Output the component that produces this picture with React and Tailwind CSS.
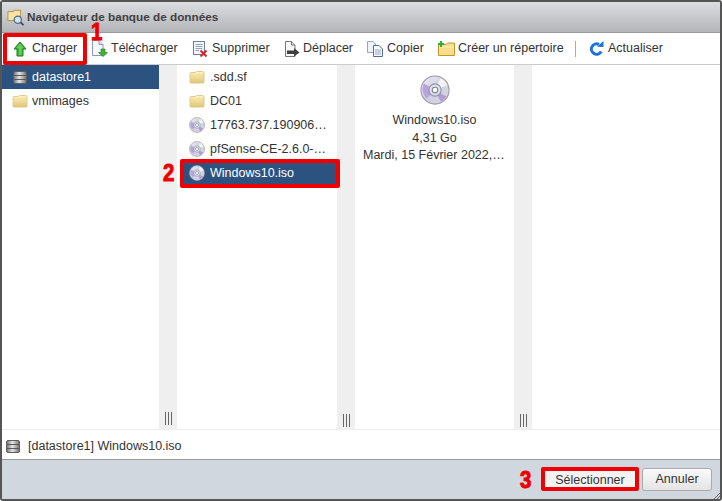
import React from "react";

const Folder = () => (
  <svg width="16" height="14" viewBox="0 0 16 14" className="shrink-0">
    <defs>
      <linearGradient id="fg" x1="0" y1="0" x2="0" y2="1">
        <stop offset="0" stopColor="#fdf3c4" />
        <stop offset="1" stopColor="#e2c673" />
      </linearGradient>
    </defs>
    <path d="M1 3.5Q1 2.5 2 2.5H6L7.5 1.5H13.5Q15 1.5 15 3V12Q15 13 14 13H2Q1 13 1 12Z" fill="url(#fg)" stroke="#d9c07c" strokeWidth="0.8" />
    <path d="M1 5H15" stroke="#f0dc9c" strokeWidth="1" />
  </svg>
);

const Disc = ({ size = 16 }) => (
  <svg width={size} height={size} viewBox="0 0 32 32" className="shrink-0">
    <defs>
      <linearGradient id="dg" x1="0" y1="0" x2="1" y2="1">
        <stop offset="0" stopColor="#efeff3" />
        <stop offset="0.5" stopColor="#cfcfe2" />
        <stop offset="1" stopColor="#d8d8de" />
      </linearGradient>
    </defs>
    <circle cx="16" cy="16" r="15" fill="url(#dg)" stroke="#9a9aa2" strokeWidth="1.2" />
    <path d="M16 16L4 9A14 14 0 0 0 7 25Z" fill="#b9a3dc" />
    <path d="M16 16L28 23A14 14 0 0 1 22 28.5Z" fill="#b49ad8" />
    <path d="M16 16L22 3.5A14 14 0 0 1 29 11Z" fill="#f3f3f6" />
    <circle cx="16" cy="16" r="6.5" fill="#dfe2ea" stroke="#8d93a5" strokeWidth="1.2" />
    <circle cx="16" cy="16" r="3" fill="#fff" stroke="#7d8396" strokeWidth="1.2" />
  </svg>
);

const Datastore = () => (
  <svg width="14" height="13" viewBox="0 0 14 13" className="shrink-0">
    <defs>
      <linearGradient id="ds" x1="0" y1="0" x2="1" y2="0">
        <stop offset="0" stopColor="#6f6f6f" />
        <stop offset="0.45" stopColor="#e6e6e6" />
        <stop offset="1" stopColor="#707070" />
      </linearGradient>
    </defs>
    <rect x="0.5" y="0.5" width="13" height="12" rx="1.5" fill="url(#ds)" stroke="#5e5e5e" />
    <path d="M1 4.5H13M1 8.5H13" stroke="#5a5a5a" strokeWidth="1" />
  </svg>
);

const Upload = () => (
  <svg width="14" height="16" viewBox="0 0 14 16" className="shrink-0">
    <path d="M7 1L13 8H10V15H4V8H1Z" fill="#3fb53a" stroke="#1f7d22" strokeWidth="1" strokeLinejoin="round" />
    <path d="M7 2.5L10.5 7H8.5V14H6V7H3.5Z" fill="#62d158" />
  </svg>
);

const Download = () => (
  <svg width="17" height="17" viewBox="0 0 17 17" className="shrink-0">
    <path d="M1.5 0.5H8L12 4.5V15.5H1.5Z" fill="#f6f8fb" stroke="#8b9bb3" />
    <path d="M8 0.5V4.5H12" fill="#dfe5ee" stroke="#8b9bb3" />
    <path d="M10 9H14V12.5H16.5L12 16.5L7.5 12.5H10Z" fill="#42b13b" stroke="#2a8a2a" strokeWidth="0.7" />
  </svg>
);

const Delete = () => (
  <svg width="15" height="16" viewBox="0 0 15 16" className="shrink-0">
    <rect x="0.5" y="0.5" width="11" height="13" fill="#f3f6fb" stroke="#6d7f9c" />
    <path d="M2.5 3.5H9.5M2.5 5.5H9.5M2.5 7.5H9.5M2.5 9.5H6" stroke="#8fa3c2" />
    <path d="M7.5 9.5L13.5 15.5M13.5 9.5L7.5 15.5" stroke="#d5262a" strokeWidth="2" />
  </svg>
);

const Move = () => (
  <svg width="16" height="16" viewBox="0 0 16 16" className="shrink-0">
    <path d="M1.5 0.5H7.5L11 4V15.5H1.5Z" fill="#f7f7f7" stroke="#777" />
    <path d="M7.5 0.5V4H11" fill="#ddd" stroke="#777" />
    <path d="M3 9.5H10V7L15.5 11.5L10 15.5V13H3Z" fill="#3f3f3f" />
  </svg>
);

const Copy = () => (
  <svg width="17" height="16" viewBox="0 0 17 16" className="shrink-0">
    <path d="M0.5 0.5H6L8.5 3V11.5H0.5Z" fill="#eef3fa" stroke="#8ea7c9" />
    <path d="M6.5 4.5H12L15.5 8V15.5H6.5Z" fill="#f6f9fd" stroke="#4f6e9b" />
    <path d="M8 9H14M8 11H14M8 13H14" stroke="#8ea7c9" />
  </svg>
);

const NewFolder = () => (
  <svg width="17" height="15" viewBox="0 0 17 15" className="shrink-0">
    <path d="M0.5 3.5H8L9.5 2H16.5V14.5H0.5Z" fill="#f7dd8c" stroke="#c6942e" />
    <path d="M1 6H16" stroke="#fcefc0" />
    <path d="M3 0V6M0 3H6" stroke="#2fae36" strokeWidth="2.2" />
  </svg>
);

const Refresh = () => (
  <svg width="15" height="15" viewBox="0 0 15 15" className="shrink-0">
    <path d="M12.2 10.5A5.2 5.2 0 1 1 10 3.4" fill="none" stroke="#1a73d6" strokeWidth="3" />
    <path d="M8 5.8L14.5 6V0Z" fill="#1a73d6" />
  </svg>
);

const Tool = ({ icon, label, className = "" }) => (
  <div className={`flex items-center ${className}`}>
    {icon}
    <span>{label}</span>
  </div>
);

const Row = ({ icon, label, selected, className }) => (
  <div className={`flex h-6 items-center pr-[4px] ${className} ${selected ? "bg-[#2c5380] text-white" : ""}`}>
    <span className="flex w-[16px] shrink-0 justify-center">{icon}</span>
    <span className="truncate">{label}</span>
  </div>
);

const Grip = ({ mb = "mb-[4px]" }) => (
  <div className="flex w-[18px] shrink-0 flex-col items-center justify-end bg-[#efefef]">
    <div className={`flex h-[13px] gap-[2px] ${mb}`}>
      <div className="w-px bg-[#666]" />
      <div className="w-px bg-[#666]" />
      <div className="w-px bg-[#666]" />
    </div>
  </div>
);

const Badge = ({ children, className = "" }) => (
  <span className={`absolute scale-x-[0.85] font-['Liberation_Sans',sans-serif] text-[24px] leading-none font-bold text-[#ee0000] [-webkit-text-stroke:1px_#ee0000] ${className}`}>
    {children}
  </span>
);

const col1 = "gap-[4px] pl-[10px]";
const col2 = "gap-[5px] pl-[9px]";

export default function App() {
  return (
    <div className="relative flex h-[501px] w-[722px] flex-col overflow-hidden rounded-[3px] border-2 border-[#555] bg-white font-['Liberation_Sans',sans-serif] text-[12.5px] text-[#333]">
      <div className="flex h-[31px] shrink-0 items-center gap-[2px] border-b border-[#999] bg-gradient-to-b from-[#dcdde0] to-[#b4b5b8] pl-[5px]">
        <svg width="18" height="18" viewBox="0 0 20 20" className="shrink-0">
          <path d="M1 4H7L8 2.5H15V14H1Z" fill="#f7e3a6" stroke="#b48c3a" />
          <circle cx="12" cy="13" r="4" fill="#cfe3f2" stroke="#4a6a88" strokeWidth="1.4" />
          <path d="M15 16L18.5 19" stroke="#3a4c63" strokeWidth="2" />
        </svg>
        <span className="text-[11.75px] font-bold text-[#3f3f42]">Navigateur de banque de données</span>
      </div>

      <div className="flex h-8 shrink-0 items-center border-b border-[#ccc] pl-[11px]">
        <Tool icon={<Upload />} label="Charger" className="w-[78px] gap-[5px]" />
        <Tool icon={<Download />} label="Télécharger" className="w-[102px] gap-[3px]" />
        <Tool icon={<Delete />} label="Supprimer" className="w-[91px] gap-[4px]" />
        <Tool icon={<Move />} label="Déplacer" className="w-[83px] gap-[3px]" />
        <Tool icon={<Copy />} label="Copier" className="w-[71px] gap-[3px]" />
        <Tool icon={<NewFolder />} label="Créer un répertoire" className="w-[137px] gap-[3px]" />
        <div className="mr-[13px] h-4 w-px bg-[#aaa]" />
        <Tool icon={<Refresh />} label="Actualiser" className="gap-[4px]" />
      </div>

      <div className="flex min-h-0 flex-1 border-b border-[#eee]">
        <div className="w-[157px] shrink-0">
          <Row className={col1} icon={<Datastore />} label="datastore1" selected />
          <Row className={col1} icon={<Folder />} label="vmimages" />
        </div>
        <Grip />
        <div className="w-[160px] shrink-0 pl-[3px]">
          <Row className={col2} icon={<Folder />} label=".sdd.sf" />
          <Row className={col2} icon={<Folder />} label="DC01" />
          <Row className={col2} icon={<Disc />} label="17763.737.190906…" />
          <Row className={col2} icon={<Disc />} label="pfSense-CE-2.6.0-…" />
          <Row className={col2} icon={<Disc />} label="Windows10.iso" selected />
        </div>
        <Grip mb="mb-[2px]" />
        <div className="flex w-[159px] shrink-0 flex-col items-center pt-[10px] text-center leading-[17.5px]">
          <Disc size={30} />
          <div className="mt-[7px]">Windows10.iso</div>
          <div>4,31 Go</div>
          <div className="w-full truncate px-2">Mardi, 15 Février 2022, 14:02</div>
        </div>
        <Grip mb="mb-[2px]" />
        <div className="flex-1" />
      </div>

      <div className="flex h-[30px] shrink-0 items-center gap-[8px] border-b border-[#999] pt-[3px] pl-1">
        <Datastore />
        <span>[datastore1] Windows10.iso</span>
      </div>

      <div className="flex h-[39px] shrink-0 items-center justify-end gap-[7px] bg-[#d1d7df] pr-2">
        <button className="h-[17px] w-[90px] bg-[#f3f3f3] text-[#333]">Sélectionner</button>
        <button className="h-[23px] w-[70px] rounded-[3px] border border-[#aaa] bg-gradient-to-b from-[#fafafa] to-[#e4e4e4] text-[#333]">Annuler</button>
      </div>

      {/* Annotations */}
      <div className="absolute top-[31px] left-[1px] h-[32px] w-[84px] rounded-[2px] border-[4px] border-[#f00000]" />
      <div className="absolute top-[157px] left-[178px] h-[29px] w-[160px] rounded-[2px] border-[4px] border-[#f00000]" />
      <div className="absolute top-[465px] left-[539px] h-[24px] w-[98px] rounded-[2px] border-[4px] border-[#f00000]" />
      <Badge className="top-[18px] left-[88px]">1</Badge>
      <Badge className="top-[159px] left-[160px]">2</Badge>
      <Badge className="top-[466px] left-[517px]">3</Badge>
      <svg width="7" height="7" viewBox="0 0 7 7" className="absolute right-0 bottom-0">
        <path d="M7 1L1 7M7 4L4 7" stroke="#666" />
      </svg>
    </div>
  );
}
